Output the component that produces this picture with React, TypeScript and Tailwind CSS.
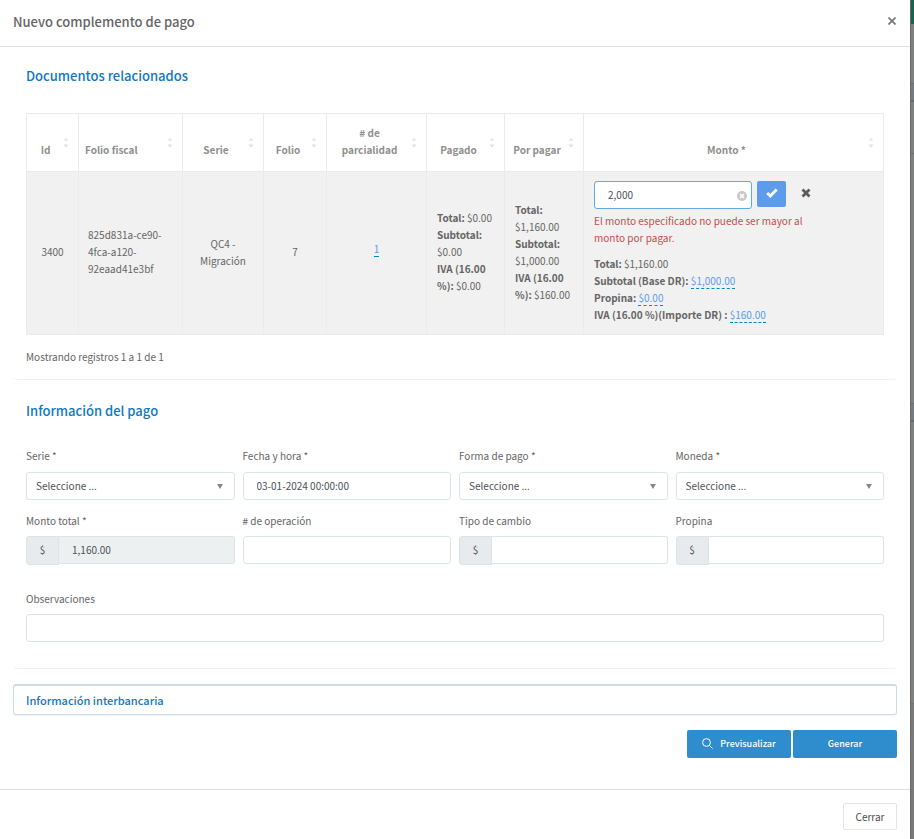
import React, { useState } from "react";

const sortColumns = [
  { label: "Id", cell: "pr-5 pl-1.5" },
  { label: "Folio fiscal", cell: "pl-1.5 pr-5 text-left" },
  { label: "Serie", cell: "pr-5 pl-1.5" },
  { label: "Folio", cell: "pr-5 pl-1.5" },
  { label: "# de parcialidad", cell: "pr-5 pl-1.5" },
  { label: "Pagado", cell: "pr-5 pl-1.5" },
  { label: "Por pagar", cell: "pr-5 pl-1.5" },
  { label: "Monto *", cell: "pr-5 pl-1.5" },
];

function SortIcon() {
  return (
    <svg viewBox="0 0 6 10" className="absolute top-6 right-[9px] h-2.5 w-1.5 fill-[#e2e2e2]" aria-hidden="true">
      <path d="M3 0 5.3 2.4H.7zM3 9.7 .4 6.5h5.2z" />
    </svg>
  );
}

function Field({ id, label, children }: { id: string; label: string; children: React.ReactNode }) {
  return (
    <div>
      <label htmlFor={id} className="block leading-4">
        {label}
      </label>
      {children}
    </div>
  );
}

const boxClass =
  "h-7 w-full min-w-0 rounded-[3px] border border-[#dbe5e8] bg-white pb-0.5 text-[10px] text-[#4c5258] outline-none";

function SelectBox({ id }: { id: string }) {
  return (
    <div className="relative mt-2">
      <select id={id} className={`${boxClass} block appearance-none px-[9px]`}>
        <option>Seleccione ...</option>
      </select>
      <svg
        viewBox="0 0 6 5"
        className="pointer-events-none absolute top-3 right-3 h-[5px] w-1.5 fill-[#888]"
        aria-hidden="true"
      >
        <path d="M0 0h6L3 5z" />
      </svg>
    </div>
  );
}

function MoneyBox({ id, value, readOnly }: { id: string; value?: string; readOnly?: boolean }) {
  return (
    <div className="mt-[7px] flex items-start">
      <span className="flex h-[29px] w-[33px] shrink-0 items-center justify-center rounded-l-[3px] border border-[#dbe5e8] bg-[#e7ebee] pb-0.5 text-[#4c5258]">
        $
      </span>
      <input
        id={id}
        defaultValue={value}
        readOnly={readOnly}
        className={`h-7 w-full min-w-0 rounded-r-[3px] border border-l-0 border-[#dbe5e8] px-[13px] pb-0.5 text-[10px] text-[#4c5258] outline-none ${
          readOnly ? "bg-[#ecf0f1]" : "bg-white"
        }`}
      />
    </div>
  );
}

function EditLink({ children }: { children: React.ReactNode }) {
  return (
    <a href="#editar" className="inline-block border-b border-dashed border-[#0088cc] leading-[15px] text-[#5d9cec]">
      {children}
    </a>
  );
}

function Amounts({ subtotal, total, iva }: { subtotal: string; total: string; iva: string }) {
  return (
    <>
      <div>
        <b>Total:</b> {total}
      </div>
      <div>
        <b>Subtotal:</b> {subtotal}
      </div>
      <div>
        <b>IVA (16.00 %):</b> {iva}
      </div>
    </>
  );
}

export default function App() {
  const [amount, setAmount] = useState("2,000");
  const bodyCell = "border border-[#ebebeb] align-middle";

  return (
    <div className="flex min-h-screen bg-[#7f8080] font-['Noto_Sans_CJK_SC','Source_Sans_Pro',sans-serif] text-[10px] leading-[17px] text-[#656565]">
      <div role="dialog" aria-labelledby="title" className="min-w-0 flex-1 bg-white">
        <header className="flex h-[47px] items-center justify-between border-b border-[#dedede] pr-3 pb-0.5 pl-[13px]">
          <h1 id="title" className="text-[13px] leading-5 font-medium">
            Nuevo complemento de pago
          </h1>
          <button aria-label="Cerrar ventana" className="flex size-3 items-center justify-center">
            <svg viewBox="0 0 8 8" className="mb-0.5 size-2 stroke-[#777]" strokeWidth="1.7" aria-hidden="true">
              <path d="m.5.5 7 7m0-7-7 7" />
            </svg>
          </button>
        </header>

        <main className="px-[13px]">
          <section className="rounded border-b border-[#f0f2f2] px-[13px] pt-[19px] pb-3.5">
            <h2 className="text-[13px] leading-5 font-medium text-[#0f77c4]">Documentos relacionados</h2>
            <table className="mt-[27px] w-full table-fixed border-collapse">
              <colgroup>
                <col className="w-[52px]" />
                <col className="w-[104px]" />
                <col className="w-[81px]" />
                <col className="w-[63px]" />
                <col className="w-[100px]" />
                <col className="w-[78px]" />
                <col className="w-[79px]" />
                <col />
              </colgroup>
              <thead>
                <tr className="h-[58px]">
                  {sortColumns.map((column) => (
                    <th
                      key={column.label}
                      scope="col"
                      className={`relative border border-[#ebebeb] pb-[13px] align-bottom font-bold text-[#8f8f8f] ${column.cell}`}
                    >
                      {column.label}
                      <SortIcon />
                    </th>
                  ))}
                </tr>
              </thead>
              <tbody>
                <tr className="bg-[#f1f1f1] text-center">
                  <td className={`${bodyCell} pb-[3px]`}>3400</td>
                  <td className={`${bodyCell} px-[9px] pb-[3px] text-left`}>825d831a-ce90-4fca-a120-92eaad41e3bf</td>
                  <td className={`${bodyCell} px-2.5 pb-[3px]`}>QC4 - Migración</td>
                  <td className={`${bodyCell} pb-[3px]`}>7</td>
                  <td className={`${bodyCell} pb-[9px]`}>
                    <a href="#parcialidad" className="inline-block border-b border-[#0088cc] leading-[14px] text-[#5d9cec]">
                      1
                    </a>
                  </td>
                  <td className={`${bodyCell} px-2.5 pb-[3px] text-left`}>
                    <Amounts total="$0.00" subtotal="$0.00" iva="$0.00" />
                  </td>
                  <td className={`${bodyCell} px-2.5 pb-[3px] text-left`}>
                    <Amounts total="$1,160.00" subtotal="$1,000.00" iva="$160.00" />
                  </td>
                  <td className={`${bodyCell} px-2.5 pt-[9px] pb-[11px] text-left`}>
                    <form className="flex items-start" onSubmit={(event) => event.preventDefault()}>
                      <div className="relative w-[158px]">
                        <input
                          aria-label="Monto"
                          value={amount}
                          onChange={(event) => setAmount(event.target.value)}
                          className="block h-7 w-full rounded-[3px] border border-[#5fa9e6] bg-white pr-6 pb-0.5 pl-[13px] text-[10px] text-[#4c5258] outline-none"
                        />
                        <button
                          type="button"
                          aria-label="Borrar"
                          onClick={() => setAmount("")}
                          className="absolute top-2.5 right-[5px] size-2.5"
                        >
                          <svg viewBox="0 0 10 10" className="size-2.5" aria-hidden="true">
                            <circle cx="5" cy="5" r="5" fill="#c9c9c9" />
                            <path d="m3 3 4 4m0-4L3 7" stroke="#fff" strokeWidth="1.5" />
                          </svg>
                        </button>
                      </div>
                      <button
                        type="submit"
                        aria-label="Aceptar"
                        className="ml-[5px] flex h-[26px] w-[29px] items-center justify-center rounded-[2px] bg-[#5d9cec]"
                      >
                        <svg viewBox="0 0 12 10" className="mb-0.5 h-2.5 w-3" aria-hidden="true">
                          <path d="m1.2 5 3.1 3 6.3-6.5" fill="none" stroke="#fff" strokeWidth="2.8" />
                        </svg>
                      </button>
                      <button
                        type="button"
                        aria-label="Cancelar"
                        className="flex h-6 w-[39px] items-center justify-center"
                      >
                        <svg viewBox="0 0 10 10" className="size-2.5" aria-hidden="true">
                          <path d="m1.5 1.5 7 7m0-7-7 7" stroke="#5c5c5c" strokeWidth="2.8" />
                        </svg>
                      </button>
                    </form>
                    <p className="mt-[3px] max-w-[220px] text-[#c34f4f]">
                      El monto especificado no puede ser mayor al monto por pagar.
                    </p>
                    <div className="mt-[9px]">
                      <div>
                        <b>Total:</b> $1,160.00
                      </div>
                      <div className="h-[17px]">
                        <b>Subtotal (Base DR):</b> <EditLink>$1,000.00</EditLink>
                      </div>
                      <div className="h-[17px]">
                        <b>Propina:</b> <EditLink>$0.00</EditLink>
                      </div>
                      <div className="h-[17px]">
                        <b>IVA (16.00 %)(Importe DR) :</b> <EditLink>$160.00</EditLink>
                      </div>
                    </div>
                  </td>
                </tr>
              </tbody>
            </table>
            <p className="mt-[13px]">Mostrando registros 1 a 1 de 1</p>
          </section>

          <section className="rounded border-b border-[#f0f2f2] px-[13px] pt-[21px] pb-[26px]">
            <h2 className="text-[13px] leading-5 font-medium text-[#0f77c4]">Información del pago</h2>
            <div className="mt-[27px] grid grid-cols-4 gap-x-2 gap-y-[13px]">
              <Field id="serie" label="Serie *">
                <SelectBox id="serie" />
              </Field>
              <Field id="fecha" label="Fecha y hora *">
                <input id="fecha" defaultValue="03-01-2024 00:00:00" className={`${boxClass} mt-2 px-[13px]`} />
              </Field>
              <Field id="forma" label="Forma de pago *">
                <SelectBox id="forma" />
              </Field>
              <Field id="moneda" label="Moneda *">
                <SelectBox id="moneda" />
              </Field>
              <Field id="monto-total" label="Monto total *">
                <MoneyBox id="monto-total" value="1,160.00" readOnly />
              </Field>
              <Field id="operacion" label="# de operación">
                <input id="operacion" className={`${boxClass} mt-[7px] px-[13px]`} />
              </Field>
              <Field id="cambio" label="Tipo de cambio">
                <MoneyBox id="cambio" />
              </Field>
              <Field id="propina" label="Propina">
                <MoneyBox id="propina" />
              </Field>
            </div>
            <div className="mt-[26px]">
              <Field id="observaciones" label="Observaciones">
                <input id="observaciones" className={`${boxClass} mt-[7px] px-[13px]`} />
              </Field>
            </div>
          </section>

          <section className="mt-[15px] rounded-[3px] border border-t-2 border-[#cfdbe2] px-3 pt-1.5 pb-[5px] shadow-[0_1px_1px_rgba(0,0,0,0.05)]">
            <h2 className="text-[11px] leading-[17px]">
              <button className="block h-[17px] font-medium text-[#0f77c4]">Información interbancaria</button>
            </h2>
          </section>

          <div className="mt-[15px] flex justify-end gap-0.5 pb-[31px] text-[9px] font-medium text-white">
            <button className="flex h-7 w-[104px] items-center justify-center gap-[7px] rounded-[2px] bg-[#2f8dcd] pb-0.5">
              <svg viewBox="0 0 11 11" className="size-[11px] fill-none stroke-white" aria-hidden="true">
                <circle cx="4.5" cy="4.5" r="3.9" />
                <path d="m7.3 7.3 3.3 3.3" />
              </svg>
              Previsualizar
            </button>
            <button className="h-7 w-[104px] rounded-[2px] bg-[#2f8dcd] pb-0.5">Generar</button>
          </div>
        </main>

        <footer className="flex justify-end border-t border-[#dedede] px-[13px] pt-[13px] pb-[9px]">
          <button className="h-[27px] w-[54px] rounded-[2px] border border-[#e4e6e6] text-[#4a4a4a]">Cerrar</button>
        </footer>
      </div>

      <div className="flex w-1 flex-col border-l border-[#6b6b6b]" aria-hidden="true">
        <div className="h-6 bg-[#16664f]" />
        <div className="h-[60px] border-b border-[#6c6e6f]" />
        <div className="h-[18px] border-b-2 border-[#646c70] bg-[#757b7f]" />
        <div className="h-[52px] border-b border-[#6c6e6f]" />
        <div className="h-[250px] border-b border-[#6c6e6f]" />
        <div className="h-[18px] border-b-2 border-[#646c70] bg-[#757b7f]" />
        <div className="h-[282px] border-b border-[#737373]" />
        <div className="flex-1 bg-[#7a7a7a]" />
      </div>
    </div>
  );
}
